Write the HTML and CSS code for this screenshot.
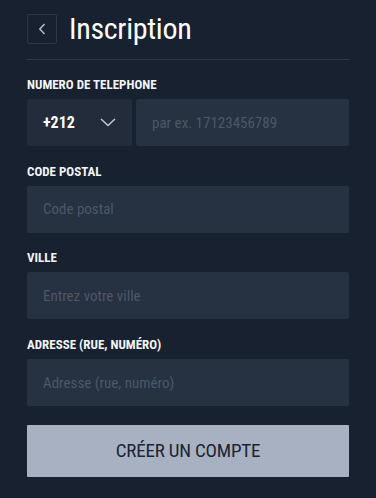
FILE: index.html
```html
<!DOCTYPE html>
<html lang="fr">
<head>
  <meta charset="UTF-8" />
  <meta name="viewport" content="width=device-width, initial-scale=1.0"/>
  <title>Inscription</title>
  <link rel="stylesheet" href="styles.css">
</head>
<body>
  <div class="signup">
    <header class="signup-head">
      <button class="back-btn" type="button" aria-label="Retour">
        <svg width="8" height="12" viewBox="0 0 8 12"><path d="M6.5 1 L1.8 6 L6.5 11" fill="none" stroke="#b9c2d0" stroke-width="1.4"/></svg>
      </button>
      <h1 class="title">Inscription</h1>
    </header>

    <form class="form">
      <div class="field">
        <label class="label">NUMERO DE TELEPHONE</label>
        <div class="phone-row">
          <div class="prefix">
            <span>+212</span>
            <svg width="16" height="9" viewBox="0 0 16 9"><path d="M1 1 L8 7.5 L15 1" fill="none" stroke="#c3cad6" stroke-width="1.5"/></svg>
          </div>
          <input class="input" type="text" placeholder="par ex. 17123456789">
        </div>
      </div>

      <div class="field">
        <label class="label">CODE POSTAL</label>
        <input class="input" type="text" placeholder="Code postal">
      </div>

      <div class="field">
        <label class="label">VILLE</label>
        <input class="input" type="text" placeholder="Entrez votre ville">
      </div>

      <div class="field">
        <label class="label">ADRESSE (RUE, NUMÉRO)</label>
        <input class="input" type="text" placeholder="Adresse (rue, numéro)">
      </div>

      <button class="submit" type="button">CRÉER UN COMPTE</button>
    </form>
  </div>
</body>
</html>
```

FILE: styles.css
```css
* {
  margin: 0;
  padding: 0;
  box-sizing: border-box;
}

body {
  font-family: "Roboto Condensed", "Liberation Sans Narrow", Roboto, sans-serif;
  background: #18212f;
  color: #fff;
}

.signup {
  padding: 14px 27px 0;
}

.signup-head {
  display: flex;
  align-items: center;
  gap: 12px;
  padding-bottom: 15px;
  border-bottom: 1px solid #2f3a4a;
}

.back-btn {
  width: 30px;
  height: 30px;
  display: flex;
  align-items: center;
  justify-content: center;
  background: transparent;
  border: 1px solid #2c3748;
  border-radius: 2px;
}

.title {
  font-size: 30px;
  font-weight: 400;
  line-height: 30px;
  letter-spacing: -0.3px;
}

.form {
  display: flex;
  flex-direction: column;
  gap: 18.7px;
  padding-top: 18px;
}

.field {
  display: flex;
  flex-direction: column;
  gap: 7px;
}

.label {
  font-size: 13px;
  font-weight: 700;
  line-height: 14px;
  color: #f2f4f7;
}

.phone-row {
  display: flex;
  gap: 4px;
}

.prefix {
  width: 105px;
  height: 47px;
  flex-shrink: 0;
  display: flex;
  align-items: center;
  justify-content: space-between;
  padding: 0 16px 0 16px;
  background: #222c3b;
  border-radius: 2px;
  font-size: 16px;
  font-weight: 700;
}

.input {
  width: 100%;
  height: 47px;
  padding: 0 16px;
  background: #263141;
  border: none;
  border-radius: 2px;
  font-family: inherit;
  font-size: 15px;
  color: #fff;
  outline: none;
}

.input::placeholder {
  color: #4d5869;
}

.submit {
  height: 52px;
  background: #a8b1c2;
  border: none;
  border-radius: 1px;
  font-family: inherit;
  font-size: 19px;
  color: #1b2331;
  letter-spacing: -0.2px;
}
```
